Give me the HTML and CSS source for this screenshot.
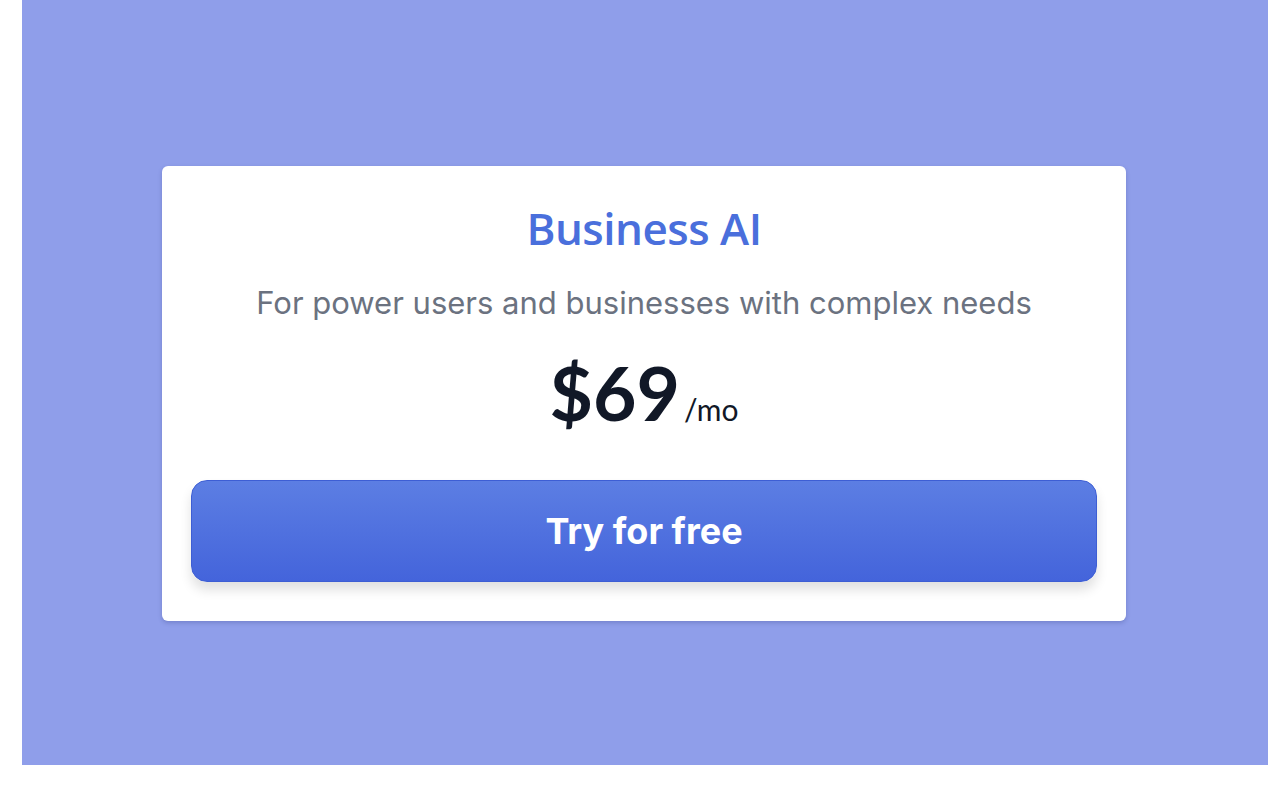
FILE: index.html
```html
<!DOCTYPE html>
<html lang="en">
<head>
<meta charset="utf-8">
<title>Business AI</title>
<link rel="stylesheet" href="styles.css">
</head>
<body>
<div class="stage">
  <div class="card">
    <h2 class="title">Business AI</h2>
    <p class="subtitle">For power users and businesses with complex needs</p>
    <div class="price"><span class="amount">$69</span><span class="per">/mo</span></div>
    <button class="cta">Try for free</button>
  </div>
</div>
</body>
</html>
```
FILE: styles.css
```css
html, body {
  margin: 0;
  padding: 0;
  background: #ffffff;
}
body {
  font-family: Inter, "Open Sans", sans-serif;
}
.stage {
  margin-left: 22px;
  width: 1246px;
  height: 765px;
  background: #8f9eea;
  box-sizing: border-box;
  padding-top: 166px;
  display: flex;
  justify-content: center;
  align-items: flex-start;
}
.card {
  width: 964px;
  height: 455px;
  box-sizing: border-box;
  background: #ffffff;
  border-radius: 6px;
  box-shadow: 0 2px 4px rgba(40, 50, 120, 0.25);
  padding: 30px 29px 0;
  display: flex;
  flex-direction: column;
  align-items: center;
  transform: translateX(-1px);
}
.title {
  margin: 0;
  font-family: "Open Sans", Inter, sans-serif;
  font-size: 44px;
  font-weight: 600;
  line-height: 64px;
  color: #4a6fdc;
  letter-spacing: -0.5px;
}
.subtitle {
  margin: 23px 0 0;
  font-size: 31px;
  line-height: 40px;
  color: #6b7280;
  font-weight: 400;
}
.price {
  margin-top: 24px;
  display: flex;
  align-items: baseline;
  color: #111827;
  font-family: Lato, sans-serif;
  line-height: 90px;
}
.amount {
  font-size: 75px;
  font-weight: 700;
}
.per {
  font-size: 30px;
  font-weight: 400;
  margin-left: 4px;
}
.cta {
  margin-top: 26px;
  width: 100%;
  height: 102px;
  border: 1px solid #3d5ed4;
  border-radius: 16px;
  background: linear-gradient(180deg, #5c7ee3 0%, #4464db 100%);
  color: #ffffff;
  font-family: Inter, sans-serif;
  font-size: 36px;
  font-weight: 700;
  box-shadow: 0 8px 12px rgba(0, 0, 0, 0.12);
  cursor: pointer;
}
```
